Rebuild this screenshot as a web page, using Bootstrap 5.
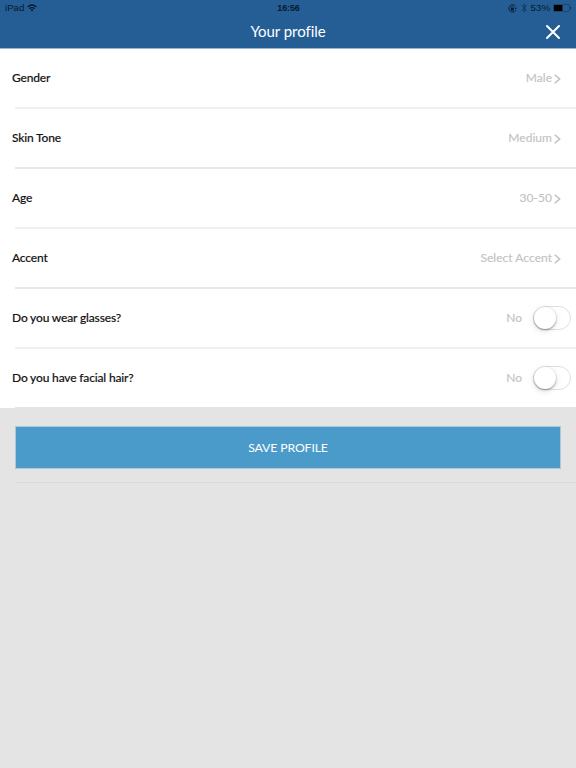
<!DOCTYPE html>
<html lang="en">
<head>
<meta charset="utf-8">
<meta name="viewport" content="width=device-width, initial-scale=1">
<title>Your profile</title>
<link href="https://cdn.jsdelivr.net/npm/bootstrap@5.3.0/dist/css/bootstrap.min.css" rel="stylesheet">
<style>
body{background:#e4e4e4;font-family:Lato,"Liberation Sans",sans-serif;min-height:768px;overflow:hidden}
.top-area{background:#245e95;height:49px;border-bottom:1px solid #a3b5ca}
.status-line{height:16px;font:9.7px/16px "Liberation Sans",sans-serif;color:#091a2b;padding:0 4px 0 5px}
.status-line>*{flex:1 1 0}
.clock{font-weight:700;font-size:9px;letter-spacing:-.1px}
.title-line{height:32px;padding:0 15px}
.screen-title{font-size:15px;line-height:28px;color:#fff;letter-spacing:-.05px;padding-bottom:2px}
.close-btn{width:16px;height:16px;line-height:0}
.setting{height:60px;padding-left:12px;padding-right:15px;padding-bottom:1px;font-size:12px;background:#fff;background-image:linear-gradient(#f0f0f0,#f0f0f0);background-size:calc(100% - 15px) 2px;background-position:15px 100%;background-repeat:no-repeat}
.setting.strong-line{background-image:linear-gradient(#e8e8e8,#e8e8e8)}
.setting.toggle-row{padding-right:5px}
.setting:nth-child(6){height:59px;padding-bottom:0;background-image:linear-gradient(#e4e4e4,#e4e4e4);background-size:calc(100% - 15px) 1px}
.caption,.value{padding-bottom:1px}
.caption{color:#151515;font-weight:500;letter-spacing:-.16px;-webkit-text-stroke:.15px #151515}
.value{color:#c3c3c3;letter-spacing:.03px;margin-right:2px;-webkit-text-stroke:.15px #c3c3c3}
.toggle-row .value{margin-right:1px}
.switch-pill{width:38px;height:24px;border:1px solid #e0e0e0;border-radius:12px;background:#fff;margin-left:10px;margin-top:-1px}
.knob{width:22px;height:22px;border-radius:50%;background:#fff;box-shadow:0 1px 2px rgba(0,0,0,.38),0 2px 7px rgba(0,0,0,.12)}
.save-area{padding:18px 15px 14px;height:75px;background:linear-gradient(#dadada,#dadada) 15px 100%/100% 1px no-repeat}
.save-btn{--bs-btn-bg:#4b9bca;--bs-btn-hover-bg:#418fbd;--bs-btn-color:#fff;--bs-btn-hover-color:#fff;height:43px;border:1px solid #a9cadd;font-size:12.3px;letter-spacing:-.15px;line-height:18px;padding:0}
</style>
</head>
<body>
<header class="top-area">
  <div class="status-line d-flex align-items-center">
    <div class="d-flex align-items-center"><span>iPad</span>
      <svg width="10" height="8" viewBox="0 0 10 8" fill="none" stroke="#091a2b" stroke-width="1.3" style="margin-left:3px"><path d="M.7 3Q5-.9 9.3 3M2.4 4.8Q5 2.4 7.6 4.8"/><path d="M3.6 5.9Q5 4.8 6.4 5.9L5 7.5z" fill="#091a2b" stroke="none"/></svg>
    </div>
    <div class="clock text-center">16:56</div>
    <div class="d-flex align-items-center justify-content-end">
      <svg width="9" height="9" viewBox="0 0 9 9" fill="none" stroke="#091a2b"><path d="M7.4 2.2A3.6 3.6 0 1 0 7.6 6.3" stroke-width=".9"/><path d="M6.3 3.8h2.5L7.7 5.5z" fill="#091a2b" stroke="none"/><path d="M2.8 4h3v2.4h-3z" fill="#091a2b" stroke="none"/><path d="M3.4 4V3Q4.3 1.8 5.2 3v1" stroke-width=".7"/></svg>
      <svg width="6" height="10" viewBox="0 0 6 10" fill="none" stroke="#143556" stroke-width=".9" style="margin:0 4px 0 4px"><path d="M.6 2.5 5.2 7 3 9V1l2.2 2L.6 7.5"/></svg>
      <span>53%</span>
      <svg width="19" height="8" viewBox="0 0 19 8" style="margin-left:3px"><rect x=".5" y=".5" width="16" height="7" rx=".8" fill="none" stroke="#173d62" stroke-width=".7"/><path d="M1 1h8.5v6H1z" fill="#000"/><path d="M17.4 2.5q1.5 1.5 0 3z" fill="#091a2b"/></svg>
    </div>
  </div>
  <div class="title-line d-flex align-items-center">
    <span class="close-btn invisible"></span>
    <h1 class="screen-title m-0 flex-grow-1 text-center fw-normal">Your profile</h1>
    <button class="close-btn btn p-0 border-0" aria-label="Close"><svg width="16" height="16" viewBox="0 0 16 16" stroke="#fff" stroke-width="2" stroke-linecap="round"><path d="m2 2 12 12M14 2 2 14"/></svg></button>
  </div>
</header>
<main>
  <div class="setting d-flex align-items-center justify-content-between"><span class="caption">Gender</span><span class="d-flex align-items-center"><span class="value">Male</span><svg width="7" height="10" viewBox="0 0 7 10" fill="none" stroke="#c0c0c5" stroke-width="1.5"><path d="m.7.7 5 4.3-5 4.3"/></svg></span></div>
  <div class="setting strong-line d-flex align-items-center justify-content-between"><span class="caption">Skin Tone</span><span class="d-flex align-items-center"><span class="value">Medium</span><svg width="7" height="10" viewBox="0 0 7 10" fill="none" stroke="#c0c0c5" stroke-width="1.5"><path d="m.7.7 5 4.3-5 4.3"/></svg></span></div>
  <div class="setting d-flex align-items-center justify-content-between"><span class="caption">Age</span><span class="d-flex align-items-center"><span class="value">30-50</span><svg width="7" height="10" viewBox="0 0 7 10" fill="none" stroke="#c0c0c5" stroke-width="1.5"><path d="m.7.7 5 4.3-5 4.3"/></svg></span></div>
  <div class="setting strong-line d-flex align-items-center justify-content-between"><span class="caption">Accent</span><span class="d-flex align-items-center"><span class="value">Select Accent</span><svg width="7" height="10" viewBox="0 0 7 10" fill="none" stroke="#c0c0c5" stroke-width="1.5"><path d="m.7.7 5 4.3-5 4.3"/></svg></span></div>
  <div class="setting toggle-row d-flex align-items-center justify-content-between"><span class="caption">Do you wear glasses?</span><span class="d-flex align-items-center"><span class="value">No</span><span class="switch-pill d-block" role="switch" aria-checked="false"><span class="knob d-block"></span></span></span></div>
  <div class="setting toggle-row d-flex align-items-center justify-content-between"><span class="caption">Do you have facial hair?</span><span class="d-flex align-items-center"><span class="value">No</span><span class="switch-pill d-block" role="switch" aria-checked="false"><span class="knob d-block"></span></span></span></div>
  <div class="save-area"><button class="btn save-btn rounded-0 w-100 d-block">SAVE PROFILE</button></div>
</main>
<script src="https://cdn.jsdelivr.net/npm/bootstrap@5.3.0/dist/js/bootstrap.bundle.min.js"></script>
</body>
</html>
